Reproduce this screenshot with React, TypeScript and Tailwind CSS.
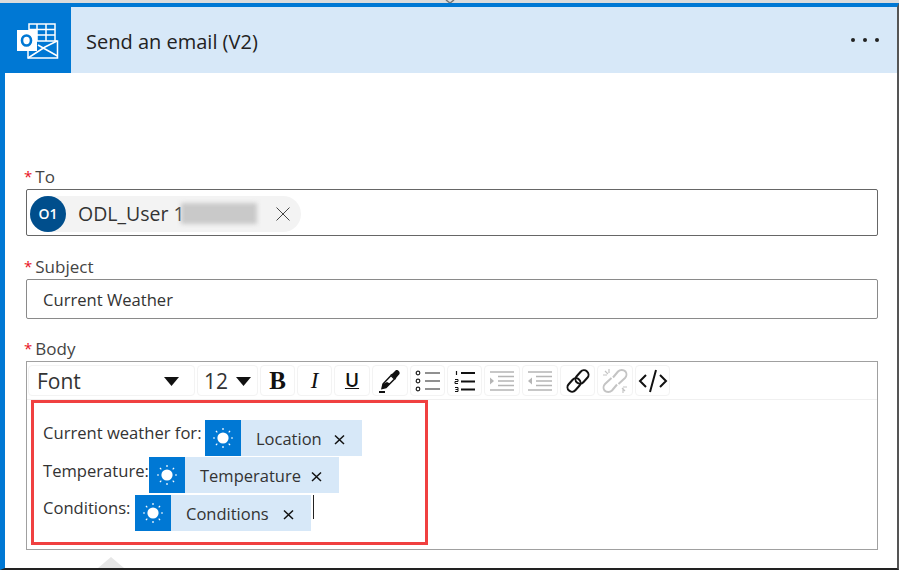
import React from 'react';

const font = { fontFamily: '"Open Sans", "Noto Sans", sans-serif' };

const OutlookIcon = () => (
  <svg width="42" height="38" viewBox="0 0 42 38" fill="none">
    <rect x="12" y="2" width="26" height="20" fill="none" stroke="white" strokeWidth="1.5" />
    <path d="M12 7.5H38M12 13H38M20 2V22M29 2V22" stroke="white" strokeWidth="1.5" />
    <path d="M11 19H40.5V36H11Z" fill="#0078d4" stroke="white" strokeWidth="1.5" />
    <path d="M11 36L28 25M28 25L40 19M21 23L28 27L40.5 34" stroke="white" strokeWidth="1.5" />
    <rect x="0" y="8" width="20" height="21" fill="white" />
    <ellipse cx="9.5" cy="18.5" rx="4.5" ry="5" fill="none" stroke="#0078d4" strokeWidth="2.6" />
  </svg>
);

const SunIcon = () => (
  <svg width="22" height="22" viewBox="0 0 22 22" fill="none">
    <circle cx="11" cy="11" r="5.6" fill="white" />
    <path
      d="M11 1V3M11 19V21M1 11H3M19 11H21M3.900 3.900L5.300 5.300M16.700 16.700L18.100 18.100M3.900 18.100L5.300 16.700M16.700 5.300L18.100 3.900"
      stroke="white"
      strokeWidth="1.2"
    />
  </svg>
);

const Caret = () => (
  <svg width="15" height="9" viewBox="0 0 15 9">
    <path d="M0 0H15L7.500 9Z" fill="#111" />
  </svg>
);

const PenIcon = () => (
  <svg width="24" height="26" viewBox="0 0 24 26" fill="none">
    <path d="M5 16L13 7.500L16.500 11L8 19.500L4 20.500Z" fill="none" stroke="#111" strokeWidth="1.500" />
    <path d="M12.500 6.500L14.500 5.500L17.500 2.500C19 1 22.500 3.500 21.500 6L18.500 9.500L17.500 11.500Z" fill="#111" />
    <path d="M4 20.500L8 19.500L12 15.500L9 14L5 16Z" fill="#111" />
    <rect x="1" y="23" width="6" height="2" fill="#111" />
  </svg>
);

const BulletIcon = () => (
  <svg width="26" height="24" viewBox="0 0 26 24" fill="none" stroke="#222">
    <circle cx="3" cy="4" r="1.800" strokeWidth="1.200" />
    <circle cx="3" cy="12" r="1.800" strokeWidth="1.200" />
    <circle cx="3" cy="20" r="1.800" strokeWidth="1.200" />
    <path d="M10 4H25M10 12H25M10 20H25" strokeWidth="1.200" />
  </svg>
);

const NumberIcon = () => (
  <svg width="22" height="24" viewBox="0 0 22 24" fill="none" stroke="#111">
    <path d="M2.500 2V6" strokeWidth="1.200" />
    <path d="M1 10.500H4V12.500H1V14.500H4" strokeWidth="1" />
    <path d="M1 18.500H4V20.500H1.500M4 20.500V22.500H1" strokeWidth="1" />
    <path d="M7 4H21M7 12.500H21M7 20.500H21" strokeWidth="2" />
  </svg>
);

const IndentIcon = () => (
  <svg width="26" height="22" viewBox="0 0 26 22" fill="none" stroke="#b5b5b5">
    <path d="M1 2H25M9 6.500H25M9 11H25M9 15.500H25M1 20H25" strokeWidth="1.500" />
    <path d="M1 7.500L5 11L1 14.500Z" fill="#b5b5b5" stroke="none" />
  </svg>
);

const OutdentIcon = () => (
  <svg width="26" height="22" viewBox="0 0 26 22" fill="none" stroke="#b5b5b5">
    <path d="M1 2H25M9 6.500H25M9 11H25M9 15.500H25M1 20H25" strokeWidth="1.500" />
    <path d="M5 7.500L1 11L5 14.500Z" fill="#b5b5b5" stroke="none" />
  </svg>
);

const LinkIcon = () => (
  <svg width="26" height="26" viewBox="0 0 26 26" fill="none" stroke="#111" strokeWidth="2">
    <rect x="12.500" y="1.500" width="9" height="15" rx="4.500" transform="rotate(42 17 9)" />
    <rect x="4.500" y="9.500" width="9" height="15" rx="4.500" transform="rotate(42 9 17)" />
  </svg>
);

const UnlinkIcon = () => (
  <svg width="26" height="26" viewBox="0 0 26 26" fill="none" stroke="#c4c4c4" strokeWidth="2">
    <path d="M11 9.500L16 3.500C18 1.500 21.500 1.500 23.500 3.500C25 5.500 24.500 8.500 23 10L16.500 16" />
    <path d="M15 16.500L10 22.500C8 24.500 4.500 24.500 2.500 22.500C1 20.500 1.500 17.500 3 16L9.500 10" />
    <path d="M7 1V5M1 7H5M3 3L6 6M20 20L23 23M21 20V25M21 19H25" strokeWidth="1.200" />
  </svg>
);

const CodeIcon = () => (
  <svg width="30" height="24" viewBox="0 0 30 24" fill="none" stroke="#111" strokeWidth="2">
    <path d="M8 6L2 12L8 18M22 6L28 12L22 18M18 1L12 23" />
  </svg>
);

const ToolButton = ({ width, children }: { width: string; children: React.ReactNode }) => (
  <div className={`flex h-[31px] items-center justify-center rounded border border-[#f3f3f3] ${width}`}>{children}</div>
);

const Label = ({ text }: { text: string }) => (
  <div className="-ml-[2px] flex h-[21px] items-center text-[17px] leading-none text-[#444]">
    <span className="mr-[3px] text-[15px] text-[#e81123]">*</span>
    {text}
  </div>
);

const Token = ({ label, width, closeGap }: { label: string; width: string; closeGap: string }) => (
  <div className={`flex h-[36px] shrink-0 bg-[#d7e8f8] ${width}`}>
    <div className="flex w-[36px] shrink-0 items-center justify-center bg-[#0078d4]">
      <SunIcon />
    </div>
    <span className="ml-[15px] mt-[7px] text-[16.500px] leading-[24px] text-[#333]">{label}</span>
    <span className={`mt-[14px] text-[#111] ${closeGap}`}>
      <svg width="11" height="11" viewBox="0 0 11 11" stroke="#111" strokeWidth="1.500">
        <path d="M1 1.500L10 10M10 1.500L1 10" />
      </svg>
    </span>
  </div>
);

export default function App() {
  return (
    <div className="flex h-[570px] w-[899px] flex-col overflow-hidden bg-white" style={font}>
      <div className="flex h-[3px] shrink-0 justify-center bg-[#dcdcdc]">
        <svg width="10" height="3" viewBox="0 0 10 3">
          <path d="M1 0L5 3L9 0" fill="none" stroke="#777" strokeWidth="1.500" />
        </svg>
      </div>
      <div className="flex min-h-0 flex-1 flex-col border-b-2 border-l-[5px] border-r-2 border-t-4 border-b-[#222] border-l-[#0078d4] border-r-[#555] border-t-[#0078d4]">
        <div className="flex h-[66px] shrink-0 items-center bg-[#d7e8f8]">
          <div className="flex h-[66px] w-[66px] items-center justify-center bg-[#0078d4] pt-[2px]">
            <OutlookIcon />
          </div>
          <div className="ml-[15px] flex-1 pt-[4px] text-[20px] text-[#222]">Send an email (V2)</div>
          <div className="mr-[6px] flex w-[40px] items-center gap-2">
            <span className="size-[4px] rounded-full bg-[#222]" />
            <span className="size-[4px] rounded-full bg-[#222]" />
            <span className="size-[4px] rounded-full bg-[#222]" />
          </div>
        </div>

        <div className="pl-[21px] pr-[19px] pt-[93px]">
          <Label text="To" />
          <div className="mt-[2px] flex h-[47px] items-center rounded-[2px] border border-[#666] pl-[3px]">
            <div className="mt-[2px] flex h-[36px] w-[271px] items-center rounded-full bg-[#f3f3f3]">
              <div className="flex size-[36px] shrink-0 items-center justify-center rounded-full bg-[#004e8c] text-[14px] font-semibold text-white">
                O1
              </div>
              <span className="ml-[12px] w-[103px] shrink-0 whitespace-nowrap text-[19.500px] leading-none text-[#333]">ODL_User 1</span>
              <div className="h-[21px] w-[76px] bg-[#c9c9c9] blur-[2px]" />
              <svg className="ml-[19px]" width="14" height="14" viewBox="0 0 14 14" stroke="#444" strokeWidth="1">
                <path d="M0.500 0.500L13.500 13.500M13.500 0.500L0.500 13.500" />
              </svg>
            </div>
          </div>

          <div className="mt-[20px]">
            <Label text="Subject" />
          </div>
          <div className="mt-[2px] flex h-[40px] items-center rounded-[2px] border border-[#8a8a8a] pl-4 pt-[3px] text-[16.600px] text-[#333]">
            Current Weather
          </div>

          <div className="mt-[19px]">
            <Label text="Body" />
          </div>
          <div className="mt-[2px] h-[189px] border border-[#a0a0a0]">
            <div className="flex h-[38px] items-center gap-[2px] border-b border-[#f0f0f0] pl-[1px]">
              <ToolButton width="w-[167px]">
                <div className="flex w-full items-center justify-between pl-2 pr-[15px] pt-[2px] text-[21px] text-[#333]">
                  Font
                  <Caret />
                </div>
              </ToolButton>
              <ToolButton width="w-[61px]">
                <div className="flex w-full items-center justify-between pl-[6px] pr-[6px] pt-[2px] text-[21px] text-[#333]">
                  12
                  <Caret />
                </div>
              </ToolButton>
              <ToolButton width="w-[35px]">
                <span className="text-[25px] font-bold leading-none text-[#111]" style={{ fontFamily: '"Liberation Serif", serif' }}>
                  B
                </span>
              </ToolButton>
              <ToolButton width="w-[35px]">
                <span className="text-[23px] italic leading-none text-[#111]" style={{ fontFamily: '"Liberation Serif", serif' }}>
                  I
                </span>
              </ToolButton>
              <ToolButton width="w-[36px]">
                <span className="text-[19px] font-semibold leading-none text-[#111] underline">U</span>
              </ToolButton>
              <ToolButton width="w-[36px]">
                <PenIcon />
              </ToolButton>
              <ToolButton width="w-[35px]">
                <BulletIcon />
              </ToolButton>
              <ToolButton width="w-[35px]">
                <NumberIcon />
              </ToolButton>
              <ToolButton width="w-[36px]">
                <IndentIcon />
              </ToolButton>
              <ToolButton width="w-[36px]">
                <OutdentIcon />
              </ToolButton>
              <ToolButton width="w-[35px]">
                <LinkIcon />
              </ToolButton>
              <ToolButton width="w-[36px]">
                <UnlinkIcon />
              </ToolButton>
              <ToolButton width="w-[35px]">
                <CodeIcon />
              </ToolButton>
            </div>

            <div className="ml-[4px] flex h-[145px] w-[397px] flex-col border-[3px] border-[#f04040] pl-[9px] pt-[17px] text-[16.600px] text-[#333]">
              <div className="flex h-[37px] shrink-0">
                <span className="mt-[1px] w-[162px] shrink-0 leading-[24px]">Current weather for:</span>
                <Token label="Location" width="w-[157px]" closeGap="ml-[12px]" />
              </div>
              <div className="flex h-[38px] shrink-0">
                <span className="mt-[2px] w-[106px] shrink-0 leading-[24px]">Temperature:</span>
                <Token label="Temperature" width="w-[190px]" closeGap="ml-[10px]" />
              </div>
              <div className="flex h-[36px] shrink-0">
                <span className="mt-[1px] w-[92px] shrink-0 leading-[24px]">Conditions:</span>
                <Token label="Conditions" width="w-[176px]" closeGap="ml-[14px]" />
                <div className="ml-[2px] h-[24px] w-px bg-[#222]" />
              </div>
            </div>
          </div>

          <svg className="ml-[72px] mt-[7px]" width="26" height="11" viewBox="0 0 26 11">
            <path d="M0 11L13 0L26 11Z" fill="#e6e6e6" />
          </svg>
        </div>
      </div>
    </div>
  );
}
